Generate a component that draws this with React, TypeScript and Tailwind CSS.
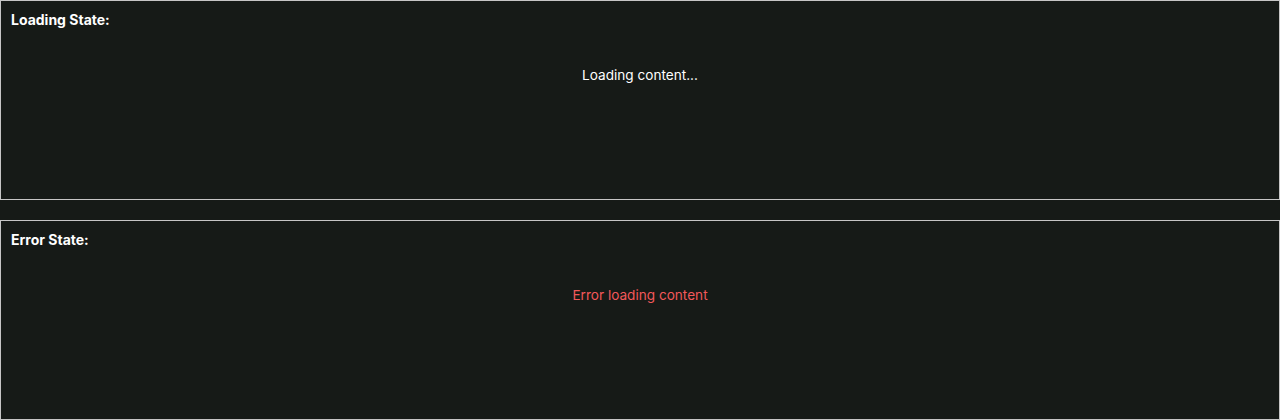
const StateBox = (props: { label: string; children: React.ReactNode }) => {
  const { label, children } = props;
  return (
    <div className="h-[200px] border border-[#c6c6c6] bg-[#161a17] p-[10px]">
      <p className="text-sm font-bold leading-[18px] text-white">{label}</p>
      <div className="mt-[36px] flex justify-center">{children}</div>
    </div>
  );
};

const App = () => {
  return (
    <div
      className="flex min-h-[420px] flex-col gap-[20px] bg-[#161a17]"
      style={{ fontFamily: "Inter, 'Liberation Sans', sans-serif" }}
    >
      <StateBox label="Loading State:">
        <p className="text-[13.6px] leading-5 text-white">Loading content...</p>
      </StateBox>
      <StateBox label="Error State:">
        <p className="text-[13.6px] leading-5 text-[#f2585a]">Error loading content</p>
      </StateBox>
    </div>
  );
};

export default App;
